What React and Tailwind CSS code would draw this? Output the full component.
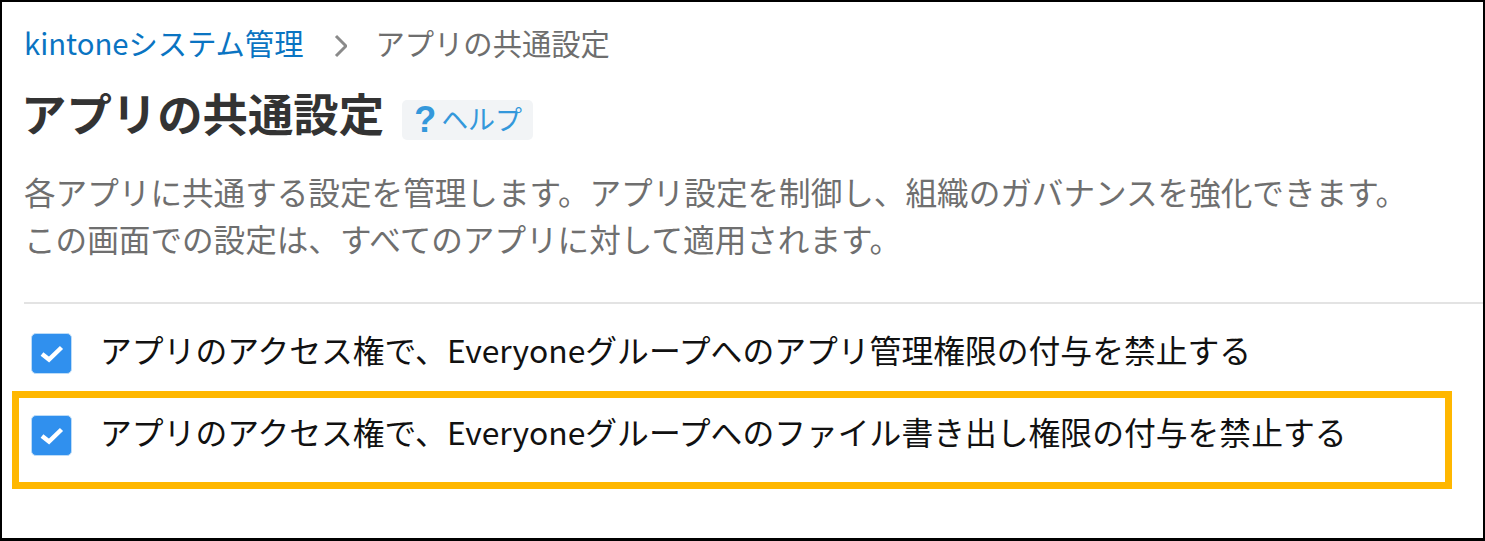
import React from 'react';

const FONT = "font-['Noto_Sans_CJK_JP','Noto_Sans',sans-serif]";

const CheckRow = ({ label, highlighted }) => (
  <div className="relative flex h-[82px] items-start pl-[29px]">
    <span className="mt-[1px] flex h-[41px] w-[41px] shrink-0 items-center justify-center rounded-[5px] border border-[#bcdcf8] bg-[#3090ee]">
      <svg width="24" height="20" viewBox="0 0 24 20" fill="none">
        <path d="M2 10L9 15.5L21.5 3.5" stroke="#fff" strokeWidth="4.5" />
      </svg>
    </span>
    <span className="mt-[-3px] ml-[28px] text-[31.8px] leading-[40px] whitespace-nowrap text-[#111]">{label}</span>
    {highlighted && (
      <div className="absolute top-[-23px] left-[10px] h-[98px] w-[1440px] border-[7px] border-[#ffb700]" />
    )}
  </div>
);

const App = () => {
  return (
    <div className={`${FONT} h-[541px] w-[1485px] overflow-hidden border-2 border-b-[3px] border-black bg-white`}>
      <div className="flex items-center pt-[22px] pl-[22px] text-[29.3px] leading-[36px]">
        <span className="text-[#0a74c2]">kintoneシステム管理</span>
        <svg className="mt-[8px] mr-[28px] ml-[28px]" width="16" height="24" viewBox="0 0 16 24" fill="none">
          <path d="M5 2L15 12L5 22" stroke="#8a8a8a" strokeWidth="3" />
        </svg>
        <span className="text-[#6e6e6e]">アプリの共通設定</span>
      </div>

      <div className="mt-[22px] flex items-start pl-[19px]">
        <h1 className="text-[45.4px] leading-[60px] font-bold text-[#333]">アプリの共通設定</h1>
        <a className="mt-[18px] ml-[18px] flex h-[40px] w-[131px] items-center rounded-[5px] bg-[#f2f4f6] pl-[12px]">
          <span className="font-['Liberation_Sans',sans-serif] text-[36px] leading-[40px] font-bold text-[#3498db]">?</span>
          <span className="mt-[-3px] ml-[5px] text-[27px] leading-[36px] text-[#3498db]">ヘルプ</span>
        </a>
      </div>

      <p className="mt-[26px] pl-[22px] text-[31.6px] leading-[47px] whitespace-nowrap text-[#6f6f6f]">
        各アプリに共通する設定を管理します。アプリ設定を制御し、組織のガバナンスを強化できます。
        <br />
        この画面での設定は、すべてのアプリに対して適用されます。
      </p>

      <div className="mt-[40px] ml-[22px] h-[2px] bg-[#e3e3e3]" />

      <div className="mt-[28px]">
        <CheckRow label="アプリのアクセス権で、Everyoneグループへのアプリ管理権限の付与を禁止する" />
        <CheckRow label="アプリのアクセス権で、Everyoneグループへのファイル書き出し権限の付与を禁止する" highlighted />
      </div>
    </div>
  );
};

export default App;
